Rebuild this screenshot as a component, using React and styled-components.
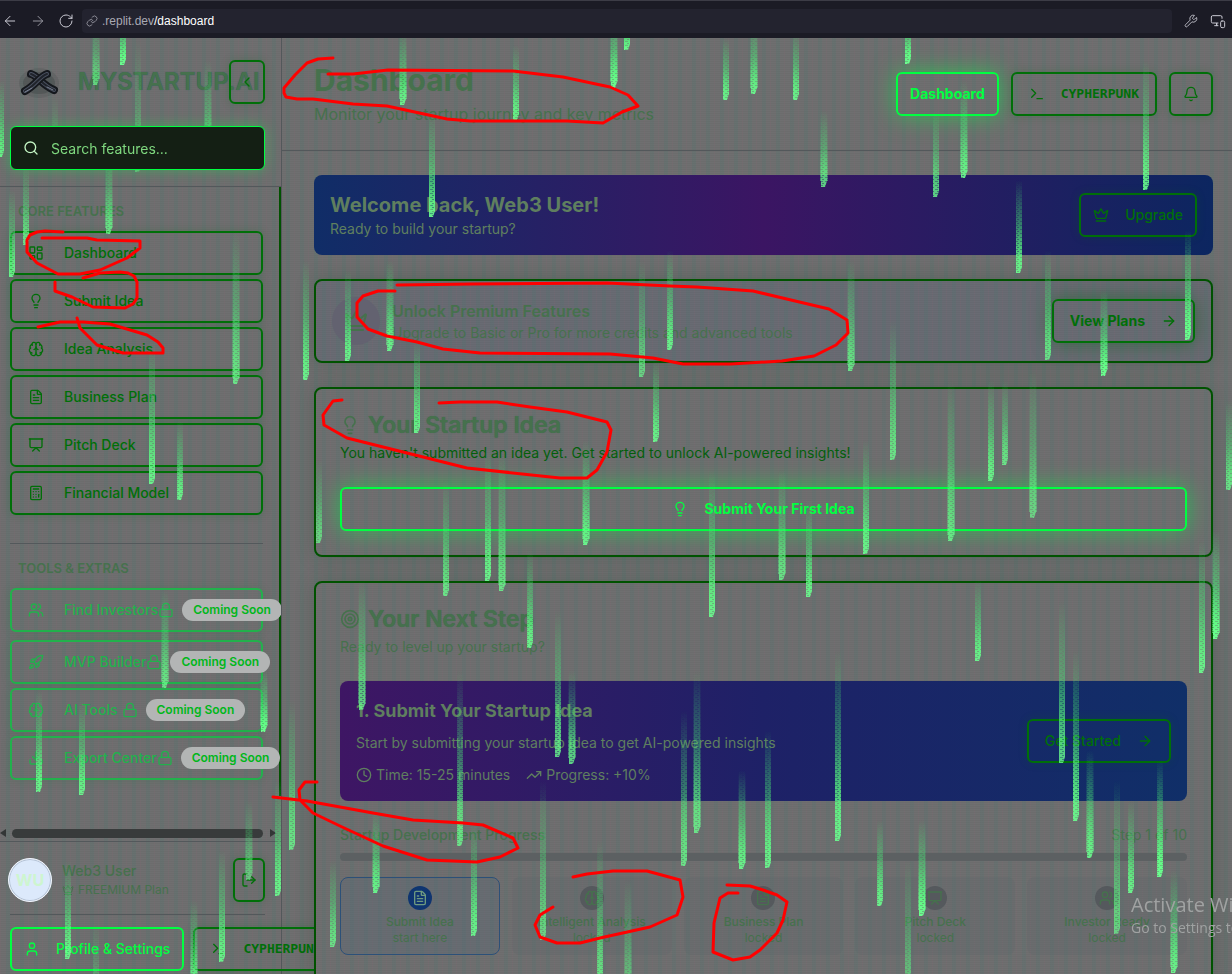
import React from "react";
import styled, { createGlobalStyle, css } from "styled-components";
import {
  ArrowLeft, ArrowRight, RotateCw, Link as LinkIcon, Wrench, MonitorSmartphone, ChevronLeft, Search,
  LayoutDashboard, Lightbulb, Brain, FileText, Presentation, Calculator, Users, Rocket, Download,
  Lock, LogOut, User, Crown, Terminal, Bell, Target, Clock, TrendingUp,
} from "lucide-react";

const color = {
  base: "#6f6f70",
  dim: "#46714d",
  dark: "#006f08",
  text: "#045f0c",
  soft: "#22b14c",
  neon: "#00ff41",
  card: "#005200",
  line: "#53585b",
  onGradient: "#5f7f5f",
};

const GlobalStyle = createGlobalStyle`
  * { box-sizing: border-box; }
  body { margin: 0; background: ${color.base}; font-family: Inter, "Liberation Sans", sans-serif; font-size: 14px; line-height: 20px; }
  h1, h2, h3, p { margin: 0; }
  button { font-family: inherit; cursor: pointer; }
`;

const texture = css`
  background-color: ${(p) => p.$fill ?? color.base};
  background-image:
    repeating-linear-gradient(90deg, rgba(170, 90, 120, 0.07) 0 1px, transparent 1px 6px, rgba(60, 120, 110, 0.14) 6px 10px, transparent 10px 14px),
    repeating-linear-gradient(0deg, rgba(0, 0, 0, 0.03) 0 1px, transparent 1px 2px);
`;

const Shell = styled.div`
  position: relative;
  display: flex;
  flex-direction: column;
  height: 100vh;
  overflow: hidden;
`;

const BrowserBar = styled.header`
  display: flex;
  align-items: center;
  gap: 12px;
  flex: none;
  height: 38px;
  padding: 2px 6px 0 2px;
  background: #1b1b25;
  border-top: 1px solid #3c3c46;
  color: #c9c9d2;
`;

const ToolButton = styled.button`
  display: flex;
  padding: 0;
  border: 0;
  background: none;
  color: inherit;
  opacity: ${(p) => (p.$faded ? 0.7 : 1)};
`;

const Address = styled.div`
  display: flex;
  align-items: center;
  flex: 1;
  gap: 4px;
  height: 24px;
  margin-left: -4px;
  padding: 0 4px;
  border-radius: 4px;
  background: #23232f;
  font: 12px/16px "Liberation Sans", sans-serif;
  color: #a9a9b3;
  b { font-weight: 400; color: #fff; }
`;

const Body = styled.div`
  display: flex;
  flex: 1;
  min-height: 0;
  ${texture}
`;

const Sidebar = styled.aside`
  display: flex;
  flex-direction: column;
  flex: none;
  width: 282px;
  border-right: 1px solid ${color.line};
`;

const SidebarTop = styled.div`
  padding: 22px 16px 16px 10px;
  border-bottom: 1px solid ${color.line};
`;

const Brand = styled.div`
  display: flex;
  align-items: center;
  height: 44px;
  margin-bottom: 22px;
  padding-left: 8px;
`;

const BrandName = styled.h2`
  flex: 1;
  width: 0;
  margin-left: 18px;
  font-size: 24px;
  line-height: 32px;
  font-weight: 600;
  white-space: nowrap;
  color: ${color.dim};
  text-shadow: 0 0 1px #2c5a66;
`;

const tones = {
  neon: css`color: ${color.neon}; border-color: ${color.neon}; box-shadow: 0 0 24px rgba(0, 255, 65, 0.5);`,
  bright: css`color: ${color.neon}; border-color: ${color.neon};`,
  soft: css`color: ${color.soft}; border-color: ${color.soft}; box-shadow: 0 0 10px rgba(0, 120, 40, 0.15);`,
  dark: css`color: ${color.dark}; border-color: ${color.dark}; box-shadow: 0 0 10px rgba(0, 100, 30, 0.2);`,
  raised: css`color: ${color.dark}; border-color: ${color.dark}; box-shadow: 0 0 20px rgba(0, 100, 20, 0.5);`,
};

const Button = styled.button`
  display: flex;
  align-items: center;
  justify-content: center;
  flex: none;
  gap: 16px;
  height: 44px;
  padding: 0 ${(p) => p.$pad ?? 12}px;
  border: 2px solid;
  border-radius: 6px;
  background: none;
  font-size: 14px;
  line-height: 20px;
  font-weight: ${(p) => p.$weight ?? 700};
  white-space: nowrap;
  ${(p) => tones[p.$tone]}
  ${(p) => p.$wide && css`width: 100%;`}
  ${(p) => p.$mono && css`font-family: "DejaVu Sans Mono", monospace; font-size: 13px; font-weight: 700;`}
`;

const CollapseButton = styled(Button)`
  width: 36px;
`;

const SearchBox = styled.label`
  position: relative;
  z-index: 6;
  display: flex;
  align-items: center;
  gap: 12px;
  height: 44px;
  padding: 0 12px;
  border: 1px solid ${color.neon};
  border-radius: 6px;
  background: #141f14;
  box-shadow: 0 0 14px rgba(0, 255, 65, 0.35);
  color: #c4f5c4;
  input {
    flex: 1;
    min-width: 0;
    border: 0;
    padding: 2px 0 0;
    background: none;
    outline: 0;
    font: 14px/20px Inter, sans-serif;
    color: #7fd87f;
  }
  input::placeholder { color: #7fd87f; opacity: 1; }
`;

const NavScroll = styled.div`
  flex: 1;
  min-height: 0;
  overflow: hidden;
`;

const NavBody = styled.nav`
  padding: 16px 16px 16px 10px;
  border-right: 2px solid ${color.card};
`;

const GroupLabel = styled.h3`
  padding: 0 8px;
  margin-bottom: 12px;
  font-size: 13px;
  line-height: 16px;
  font-weight: 600;
  text-transform: uppercase;
  color: ${color.dim};
`;

const NavList = styled.div`
  display: flex;
  flex-direction: column;
  gap: 4px;
  margin-bottom: ${(p) => p.$after ?? 0}px;
`;

const NavButton = styled(Button)`
  justify-content: flex-start;
  gap: 20px;
  padding: 0 0 0 16px;
  font-weight: 500;
  svg { flex: none; }
`;

const LockedLabel = styled.span`
  display: flex;
  align-items: center;
  svg { margin-left: ${(p) => (p.$loose ? 4 : 0)}px; }
`;

const SoonBadge = styled.span`
  margin-left: 8px;
  padding: 1px 11px;
  border-radius: 11px;
  background: #b3b5b5;
  font-size: 12px;
  font-weight: 600;
  color: #00b71a;
`;

const Rule = styled.hr`
  height: 1px;
  margin: ${(p) => p.$before}px 0 ${(p) => p.$after}px;
  border: 0;
  background: ${color.line};
`;

const ScrollTrack = styled.div`
  display: flex;
  align-items: center;
  gap: 6px;
  height: 16px;
  padding: 0 4px 0 0;
  color: #333636;
  span { flex: 1; height: 9px; border-radius: 5px; background: #383b3b; }
`;

const SidebarFooter = styled.div`
  padding: 16px 16px 3px 10px;
  border-top: 1px solid ${color.line};
`;

const UserRow = styled.div`
  display: flex;
  align-items: center;
  gap: 10px;
  margin-left: -2px;
`;

const Avatar = styled.div`
  display: grid;
  place-items: center;
  width: 44px;
  height: 44px;
  border-radius: 50%;
  background: #dce9fb;
  border: 1px solid #f2f7ff;
  box-shadow: inset 0 0 0 1px #b4c2d4;
  font-size: 16px;
  font-weight: 700;
  color: #cdf5cf;
`;

const UserText = styled.div`
  flex: 1;
  color: ${color.dim};
  font-weight: 500;
  small { display: flex; align-items: center; gap: 4px; font-size: 12px; line-height: 18px; font-weight: 400; }
`;

const LogoutButton = styled(Button)`
  width: 32px;
`;

const FooterButtons = styled.div`
  display: flex;
  gap: 9px;
`;

const Main = styled.main`
  flex: 1;
  min-width: 0;
`;

const PageHeader = styled.header`
  display: flex;
  align-items: center;
  gap: 12px;
  height: 113px;
  padding: 0 19px 0 32px;
  border-bottom: 1px solid ${color.line};
`;

const Heading = styled.div`
  flex: 1;
  color: ${color.dim};
  h1 { font-size: 30px; line-height: 36px; font-weight: 700; margin-bottom: 4px; }
  p { font-size: 16px; line-height: 24px; }
`;

const Content = styled.div`
  display: flex;
  flex-direction: column;
  gap: 24px;
  padding: 24px 19px 24px 32px;
`;

const Gradient = styled.section`
  display: flex;
  align-items: center;
  justify-content: space-between;
  padding: 16px;
  border-radius: 8px;
  color: ${color.onGradient};
  background: linear-gradient(90deg, ${(p) => p.$stops});
  h2 { font-size: 20px; line-height: 28px; font-weight: 700; }
  h3 { font-size: 18px; line-height: 28px; font-weight: 700; margin-bottom: 8px; }
`;

const Card = styled.section`
  position: relative;
  padding: ${(p) => p.$pad ?? 24}px;
  border: 2px solid ${color.card};
  border-radius: 8px;
  box-shadow: 0 0 20px rgba(0, 60, 30, 0.2);
  ${texture}
`;

const PromoCard = styled(Card)`
  display: flex;
  align-items: center;
  gap: 12px;
`;

const PromoIcon = styled.div`
  display: grid;
  place-items: center;
  width: 48px;
  height: 48px;
  border-radius: 50%;
  background: #636270;
  color: ${color.dim};
`;

const PromoText = styled.div`
  flex: 1;
  color: ${color.dim};
  h3 { font-size: 16px; line-height: 24px; font-weight: 600; }
`;

const CardTitle = styled.h2`
  display: flex;
  align-items: center;
  gap: 8px;
  margin-bottom: 6px;
  font-size: 23px;
  line-height: 24px;
  font-weight: 600;
  color: ${color.dim};
  text-shadow: 0 0 1px #3c6650;
`;

const CardText = styled.p`
  margin-bottom: 24px;
  color: ${(p) => (p.$dim ? color.dim : color.text)};
`;

const Meta = styled.div`
  display: flex;
  gap: 16px;
  margin-top: 12px;
  span { display: flex; align-items: center; gap: 4px; }
`;

const ProgressHead = styled.div`
  display: flex;
  justify-content: space-between;
  margin: 24px 0 8px;
  font-weight: 500;
  color: ${color.dim};
  span { font-weight: 400; }
`;

const ProgressBar = styled.div`
  height: 8px;
  border-radius: 4px;
  background: #5c6062;
`;

const Steps = styled.div`
  display: grid;
  grid-template-columns: repeat(5, 1fr);
  gap: 12px;
  margin-top: 16px;
`;

const Step = styled.div`
  display: flex;
  flex-direction: column;
  align-items: center;
  padding: 8px;
  border: 1px solid ${(p) => (p.$active ? "#2c5078" : "transparent")};
  border-radius: 8px;
  background: ${(p) => (p.$active ? "rgba(80, 100, 120, 0.25)" : "rgba(90, 100, 105, 0.2)")};
  font-size: 12px;
  line-height: 16px;
  color: ${color.dim};
  b { font-weight: 500; }
`;

const StepIcon = styled.div`
  display: grid;
  place-items: center;
  width: 24px;
  height: 24px;
  margin-bottom: 4px;
  border-radius: 50%;
  background: ${(p) => (p.$active ? "#0f3570" : "#55595d")};
  color: ${(p) => (p.$active ? "#6f9a80" : color.dim)};
`;

const Overlay = styled.svg`
  position: absolute;
  inset: 0;
  z-index: 5;
  width: 100%;
  height: 100%;
  pointer-events: none;
`;

const Ink = styled(Overlay)`
  z-index: 8;
`;

const Watermark = styled.div`
  position: absolute;
  z-index: 7;
  top: 893px;
  left: 1131px;
  font: 14px/22px "Open Sans", sans-serif;
  white-space: nowrap;
  color: #a0a2a2;
  pointer-events: none;
  strong { display: block; font-size: 20px; line-height: 24px; font-weight: 400; }
`;

const CORE = [
  ["Dashboard", LayoutDashboard], ["Submit Idea", Lightbulb], ["Idea Analysis", Brain],
  ["Business Plan", FileText], ["Pitch Deck", Presentation], ["Financial Model", Calculator],
];

const INVESTORS = [["Find Investors", Users]];
const EXTRAS = [["MVP Builder", Rocket], ["AI Tools", Brain], ["Export Center", Download]];

const STEPS = [
  ["Submit Idea", "start here", FileText], ["Intelligent Analysis", "locked", Brain],
  ["Business Plan", "locked", FileText], ["Pitch Deck", "locked", Presentation],
  ["Investor Ready", "locked", Users],
];

// Falling code streams: centre x, top, bottom, opacity of the head.
const RAIN = [
  [96, 20, 85, .7], [123, 10, 65, 1], [138, 40, 172, .5], [208, 60, 166, .8], [55, 95, 170, .4], [1, 80, 157, .9],
  [109, 150, 234, .8], [26, 165, 245, .8], [12, 190, 277, .9], [236, 230, 384, .8], [152, 340, 484, .9], [180, 420, 500, .9],
  [165, 590, 688, .8], [39, 690, 792, .9], [82, 700, 795, .9], [264, 670, 732, 1], [292, 700, 850, .8], [278, 780, 896, .9],
  [249, 800, 880, .6], [68, 860, 959, .9], [222, 850, 962, .9], [194, 900, 990, .9], [96, 920, 1000, .4], [306, 260, 380, .9],
  [403, 30, 105, .9], [432, 110, 217, .9], [516, 45, 120, .9], [614, 10, 88, 1], [627, 20, 50, 1], [726, 38, 100, .9],
  [754, 20, 94, .9], [796, 30, 100, .9], [908, 10, 64, 1], [964, 80, 178, .9], [936, 110, 197, .8], [1146, 60, 190, .9],
  [824, 110, 187, .8], [1019, 180, 273, .9], [1048, 250, 360, .8], [1104, 290, 376, 1], [1188, 230, 340, 1], [348, 270, 361, .9],
  [390, 260, 351, .9], [642, 260, 377, .7], [670, 250, 350, .9], [851, 260, 371, .8], [656, 360, 442, .9], [893, 320, 460, .8],
  [951, 380, 541, .8], [991, 380, 481, .9], [1005, 380, 465, .8], [1033, 370, 518, .7], [417, 340, 433, .9], [319, 460, 543, .7],
  [586, 440, 545, .9], [446, 480, 596, .8], [488, 450, 581, .9], [502, 450, 591, .8], [530, 550, 648, .9], [712, 470, 617, .9],
  [782, 470, 580, .8], [809, 500, 597, .9], [866, 440, 554, .9], [362, 580, 710, .8], [978, 580, 661, .9], [1202, 540, 673, .9],
  [1216, 530, 639, 1], [1229, 400, 490, .8], [558, 610, 757, .8], [572, 670, 764, .8], [460, 670, 846, .8], [684, 710, 866, .8],
  [697, 670, 833, .8], [838, 650, 841, .9], [768, 730, 868, .9], [742, 770, 869, .9], [543, 780, 940, .7], [474, 820, 936, .9],
  [376, 810, 893, .9], [333, 860, 947, .8], [600, 840, 990, .8], [628, 880, 1000, .6], [1062, 600, 763, .8], [1076, 650, 821, .9],
  [1090, 750, 858, .9], [1160, 760, 877, 1], [880, 820, 906, .9], [922, 820, 916, 1], [1117, 780, 934, .7], [1131, 800, 893, .9],
  [1174, 870, 973, .9], [908, 860, 1000, .6],
];

// Hand-drawn marker strokes over the page.
const INK = [
  "333,58 318,59 307,63 295,75 284,88 284,93 286,97 297,99 313,99 353,104 387,106 447,119 470,121 567,121 603,123 622,112 638,106 628,95 610,87 563,77 513,71 388,70 353,74 328,74",
  "63,232 45,231 37,232 30,235 27,240 27,252 37,263 58,274 80,274 100,270 127,258 140,248 140,241 97,240 87,238 42,238",
  "83,278 100,273 120,272 128,273 134,276 137,282 137,298 133,304 125,308 93,307 72,297 55,291 55,282",
  "38,327 60,322 83,322 110,324 147,335 158,342 163,348 163,353 123,353 97,345 80,328 77,318",
  "395,291 378,291 363,296 357,303 357,317 368,329 387,336 417,342 443,349 480,353 610,354 653,358 683,364 731,364 782,361 814,356 836,345 848,333 847,320 829,309 791,300 753,291 697,287 670,286 607,283 473,284 397,285",
  "342,400 333,401 323,415 324,425 347,438 427,458 467,468 560,478 587,478 597,470 607,452 611,430 607,422 567,412 530,407 497,402 460,402 439,403",
  "273,797 307,801 373,813 413,820 463,823 483,825 513,838 518,848 500,857 477,862 427,860 383,846 340,826 313,813 300,800 299,790 305,782 317,782",
  "573,877 587,874 613,871 647,871 680,880 683,897 677,915 650,927 600,938 580,943 557,943 540,937 535,925 540,915 553,907",
  "738,893 728,893 720,898 714,923 713,952 733,960 750,957 760,950 777,933 783,920 787,902 777,895 760,889 750,886 727,885",
];

function Logo() {
  return (
    <svg width="42" height="36" viewBox="0 0 42 36" fill="none" strokeLinecap="round" aria-hidden="true">
      <ellipse cx="21" cy="19" rx="20" ry="15" fill="#454b4b" opacity="0.25" />
      <ellipse cx="21" cy="19" rx="16" ry="11" fill="#3d4343" opacity="0.4" />
      <path d="M13 10C20 12 24 21 36 26" stroke="#15181d" strokeWidth="8" />
      <path d="M13 10C20 12 24 21 36 26" stroke="#4a5160" strokeWidth="4" />
      <path d="M13 10C20 12 24 21 36 26" stroke="#20242b" strokeWidth="2" />
      <path d="M29 10C22 12 18 21 7 27" stroke="#15181d" strokeWidth="8" />
      <path d="M29 10C22 12 18 21 7 27" stroke="#4a5160" strokeWidth="4" />
      <path d="M29 10C22 12 18 21 7 27" stroke="#20242b" strokeWidth="2" />
      <path d="M7 28l7-4M35 26l-6-3" stroke="#7c8496" strokeWidth="1" />
    </svg>
  );
}

function Rain() {
  return (
    <Overlay aria-hidden="true">
      <defs>
        <linearGradient id="stream" x1="0" y1="0" x2="0" y2="1">
          <stop offset="0" stopColor="#41e070" stopOpacity="0" />
          <stop offset="0.5" stopColor="#4be878" stopOpacity="0.4" />
          <stop offset="0.85" stopColor="#62ff86" stopOpacity="0.9" />
          <stop offset="1" stopColor="#6cff90" stopOpacity="1" />
        </linearGradient>
        <pattern id="glyphs" width="5" height="4" patternUnits="userSpaceOnUse">
          <rect width="5" height="4" fill="#fff" />
          <rect y="1" width="3" height="1" fill="#999" />
          <rect x="2" y="3" width="2" height="1" fill="#888" />
        </pattern>
        <mask id="grain"><rect width="100%" height="100%" fill="url(#glyphs)" /></mask>
        <clipPath id="viewport"><rect y="38" width="100%" height="100%" /></clipPath>
      </defs>
      <g clipPath="url(#viewport)">
        <g mask="url(#grain)">
          {RAIN.map(([x, top, bottom, opacity], i) => {
            const reach = i % 3 === 0 ? 4 : 3;
            return (
              <g key={`${x}-${top}`} fill="url(#stream)" opacity={opacity}>
                <rect x={x - reach} y={top} width={reach * 2} height={bottom - top - 6} opacity="0.6" />
                <path d={`M${x - 3} ${top}h6v${bottom - top - 6}l-2 6h-4z`} />
              </g>
            );
          })}
        </g>
      </g>
    </Overlay>
  );
}

function LockedItem({ label, Icon }) {
  return (
    <NavButton $tone="soft">
      <Icon size={16} />
      <LockedLabel $loose={label.length < 10}>{label}<Lock size={16} /><SoonBadge>Coming Soon</SoonBadge></LockedLabel>
    </NavButton>
  );
}

export default function App() {
  return (
    <Shell>
      <GlobalStyle />
      <BrowserBar>
        <ToolButton aria-label="Back"><ArrowLeft size={16} strokeWidth={1.5} /></ToolButton>
        <ToolButton aria-label="Forward" $faded><ArrowRight size={16} strokeWidth={1.5} /></ToolButton>
        <ToolButton aria-label="Reload"><RotateCw size={16} strokeWidth={1.5} /></ToolButton>
        <Address><LinkIcon size={12} strokeWidth={1.5} /><span>.replit.dev<b>/dashboard</b></span></Address>
        <ToolButton aria-label="Tools"><Wrench size={14} strokeWidth={1.5} /></ToolButton>
        <ToolButton aria-label="Devices"><MonitorSmartphone size={16} strokeWidth={1.5} /></ToolButton>
      </BrowserBar>
      <Body>
        <Sidebar>
          <SidebarTop>
            <Brand>
              <Logo />
              <BrandName>MYSTARTUP.AI</BrandName>
              <CollapseButton $tone="dark" $pad={0} aria-label="Collapse sidebar"><ChevronLeft size={16} /></CollapseButton>
            </Brand>
            <SearchBox>
              <Search size={16} />
              <input aria-label="Search features" placeholder="Search features..." />
            </SearchBox>
          </SidebarTop>
          <NavScroll>
            <NavBody>
              <GroupLabel>Core Features</GroupLabel>
              <NavList>
                {CORE.map(([label, Icon]) => (
                  <NavButton key={label} $tone="dark"><Icon size={16} />{label}</NavButton>
                ))}
              </NavList>
              <Rule $before={28} $after={16} />
              <GroupLabel>Tools &amp; Extras</GroupLabel>
              <NavList $after={8}>
                {INVESTORS.map(([label, Icon]) => <LockedItem key={label} label={label} Icon={Icon} />)}
              </NavList>
              <NavList>
                {EXTRAS.map(([label, Icon]) => <LockedItem key={label} label={label} Icon={Icon} />)}
              </NavList>
            </NavBody>
          </NavScroll>
          <ScrollTrack>
            <svg width="6" height="10" viewBox="0 0 6 10"><path d="M6 1v8L0 5z" fill="currentColor" /></svg>
            <span />
            <svg width="8" height="10" viewBox="0 0 8 10"><path d="M1 1v8l6-4z" fill="currentColor" /></svg>
          </ScrollTrack>
          <SidebarFooter>
            <UserRow>
              <Avatar>WU</Avatar>
              <UserText>Web3 User<small><Crown size={12} />FREEMIUM Plan</small></UserText>
              <LogoutButton $tone="dark" $pad={0} aria-label="Log out"><LogOut size={16} /></LogoutButton>
            </UserRow>
            <Rule $before={12} $after={12} />
            <FooterButtons>
              <Button $tone="bright" $weight={500}><User size={16} />Profile &amp; Settings</Button>
              <Button $tone="dark" $mono $pad={16}><Terminal size={16} />CYPHERPUNK</Button>
            </FooterButtons>
          </SidebarFooter>
        </Sidebar>
        <Main>
          <PageHeader>
            <Heading>
              <h1>Dashboard</h1>
              <p>Monitor your startup journey and key metrics</p>
            </Heading>
            <Button $tone="neon">Dashboard</Button>
            <Button $tone="dark" $mono $pad={16}><Terminal size={16} />CYPHERPUNK</Button>
            <Button $tone="dark" aria-label="Notifications"><Bell size={16} /></Button>
          </PageHeader>
          <Content>
            <Gradient $stops="#102d67, #3b1563 50%, #0c2660">
              <div><h2>Welcome back, Web3 User!</h2><p>Ready to build your startup?</p></div>
              <Button $tone="dark" $weight={500}><Crown size={16} />Upgrade</Button>
            </Gradient>
            <PromoCard $pad={16} $fill="#696b73">
              <PromoIcon><Crown size={24} /></PromoIcon>
              <PromoText><h3>Unlock Premium Features</h3><p>Upgrade to Basic or Pro for more credits and advanced tools</p></PromoText>
              <Button $tone="raised" $pad={16}>View Plans<ArrowRight size={16} /></Button>
            </PromoCard>
            <Card>
              <CardTitle><Lightbulb size={20} />Your Startup Idea</CardTitle>
              <CardText>You haven't submitted an idea yet. Get started to unlock AI-powered insights!</CardText>
              <Button $tone="neon" $wide><Lightbulb size={16} />Submit Your First Idea</Button>
            </Card>
            <Card>
              <CardTitle><Target size={20} />Your Next Step</CardTitle>
              <CardText $dim>Ready to level up your startup?</CardText>
              <Gradient $stops="#3e1664, #1e2167 50%, #102f68">
                <div>
                  <h3>1. Submit Your Startup Idea</h3>
                  <p>Start by submitting your startup idea to get AI-powered insights</p>
                  <Meta><span><Clock size={16} />Time: 15-25 minutes</span><span><TrendingUp size={16} />Progress: +10%</span></Meta>
                </div>
                <Button $tone="dark" $pad={16} $weight={500}>Get Started<ArrowRight size={16} /></Button>
              </Gradient>
              <ProgressHead>Startup Development Progress<span>Step 1 of 10</span></ProgressHead>
              <ProgressBar />
              <Steps>
                {STEPS.map(([label, state, Icon], i) => (
                  <Step key={label} $active={i === 0}>
                    <StepIcon $active={i === 0}><Icon size={16} /></StepIcon>
                    <b>{label}</b><span>{state}</span>
                  </Step>
                ))}
              </Steps>
            </Card>
          </Content>
        </Main>
      </Body>
      <Rain />
      <Watermark><strong>Activate Windows</strong>Go to Settings to activate Windows.</Watermark>
      <Ink aria-hidden="true" fill="none" stroke="#ff0000" strokeWidth="3" strokeLinecap="round" strokeLinejoin="round">
        {INK.map((points) => <polyline key={points} points={points} />)}
      </Ink>
    </Shell>
  );
}
